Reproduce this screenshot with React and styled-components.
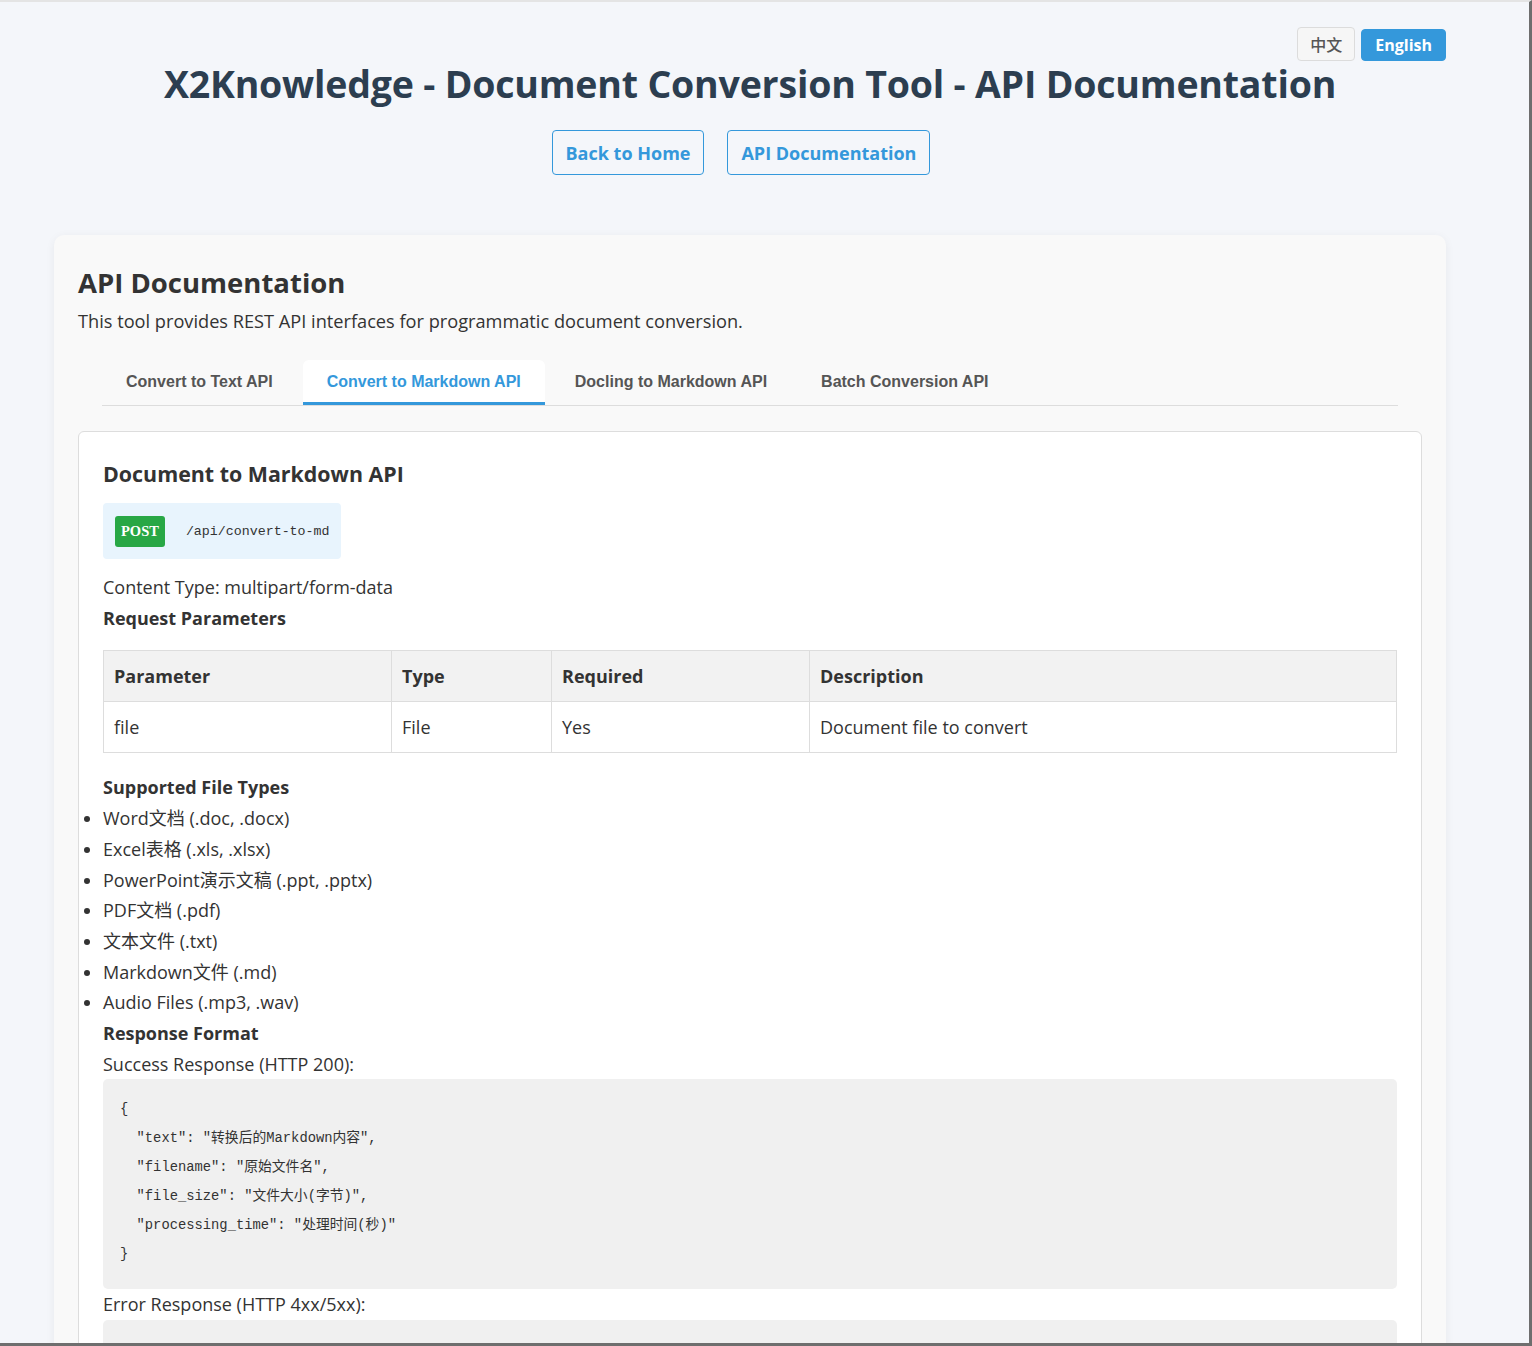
import React, { useState } from "react";
import styled, { createGlobalStyle } from "styled-components";

const GlobalStyle = createGlobalStyle`
  html, body {
    margin: 0;
    padding: 0;
    background: #f4f6fa;
  }
  body {
    font-family: "Open Sans", "Noto Sans CJK SC", sans-serif;
    color: #333;
  }
`;

// 창 테두리 (스크린샷의 프레임)
const Frame = styled.div`
  position: fixed;
  inset: 0;
  z-index: 10;
  pointer-events: none;
  border-top: 2px solid #e4e4e4;
  border-right: 3px solid #6e6e6e;
  border-bottom: 3px solid #6e6e6e;
`;

const Page = styled.div`
  position: relative;
  width: 1392px;
  margin-left: 54px;
  padding-bottom: 40px;
`;

const LangSwitch = styled.div`
  position: absolute;
  top: 27px;
  right: 0;
  display: flex;
  gap: 6px;
  align-items: flex-end;
`;

const LangButton = styled.button`
  font-family: "Open Sans", "Noto Sans CJK SC", sans-serif;
  font-size: 16px;
  font-weight: ${(p) => (p.active ? 700 : 500)};
  height: ${(p) => (p.active ? "32px" : "34px")};
  padding: 0 ${(p) => (p.active ? "13px" : "12px")};
  border-radius: 4px;
  border: 1px solid ${(p) => (p.active ? "#3498db" : "#dcdcdc")};
  background: ${(p) => (p.active ? "#3498db" : "#f6f6f6")};
  color: ${(p) => (p.active ? "#fff" : "#555")};
  cursor: pointer;
`;

const Header = styled.header`
  display: flex;
  flex-direction: column;
  align-items: center;
  padding-top: 60px;
`;

const Title = styled.h1`
  margin: 0;
  font-size: 37.5px;
  line-height: 48px;
  font-weight: 700;
  color: #2c3e50;
  letter-spacing: -0.2px;
`;

const NavRow = styled.nav`
  display: flex;
  gap: 23px;
  margin-top: 22px;
  margin-right: 18px;
`;

const NavButton = styled.a`
  display: flex;
  align-items: center;
  height: 45px;
  box-sizing: border-box;
  padding: 0 13px;
  border: 1px solid #3498db;
  border-radius: 4px;
  color: #3498db;
  font-size: 18px;
  font-weight: 700;
  text-decoration: none;
  background: transparent;
`;

const Card = styled.section`
  margin-top: 60px;
  background: #f9f9f9;
  border-radius: 10px;
  box-shadow: 0 2px 10px rgba(0, 0, 0, 0.06);
  padding: 30px 24px 24px;
`;

const CardTitle = styled.h2`
  margin: 0;
  font-size: 27.5px;
  line-height: 36px;
  font-weight: 700;
  color: #333;
`;

const Lead = styled.p`
  margin: 5px 0 0;
  font-size: 18.2px;
  line-height: 30px;
`;

const Tabs = styled.div`
  display: flex;
  margin: 24px 24px 0;
  border-bottom: 1px solid #ddd;
`;

const Tab = styled.button`
  height: 45px;
  padding: 2px 24px 0;
  border: none;
  border-bottom: 3px solid ${(p) => (p.active ? "#3498db" : "transparent")};
  border-radius: 6px 6px 0 0;
  background: ${(p) => (p.active ? "#fff" : "transparent")};
  color: ${(p) => (p.active ? "#3498db" : "#555")};
  font-family: "Liberation Sans", Arial, sans-serif;
  font-size: 16px;
  font-weight: 700;
  cursor: pointer;
  margin-right: 6px;
`;

const Panel = styled.div`
  margin-top: 25px;
  background: #fff;
  border: 1px solid #ddd;
  border-radius: 6px;
  padding: 27px 24px 24px;
`;

const PanelTitle = styled.h3`
  margin: 0;
  font-size: 21.4px;
  line-height: 29px;
  font-weight: 700;
  color: #333;
`;

const Endpoint = styled.div`
  display: inline-flex;
  align-items: center;
  gap: 21px;
  margin-top: 15px;
  padding: 13px 11px 12px 12px;
  background: #e8f4fd;
  border-radius: 4px;
`;

const Method = styled.span`
  display: inline-flex;
  align-items: center;
  height: 31px;
  padding: 0 6px;
  background: #28a745;
  color: #fff;
  border-radius: 3px;
  font-family: "Liberation Serif", "Noto Sans CJK SC", serif;
  font-weight: 700;
  font-size: 14.5px;
`;

const Path = styled.code`
  font-family: "Liberation Mono", "Noto Sans CJK SC", monospace;
  font-size: 13.3px;
  color: #333;
`;

const Text = styled.p`
  margin: ${(p) => p.mt || 0}px 0 0;
  font-size: 18px;
  line-height: 30.7px;
  font-weight: ${(p) => (p.bold ? 700 : 400)};
`;

const Table = styled.table`
  width: 100%;
  margin-top: 17px;
  border-collapse: collapse;
  font-size: 18px;
  th, td {
    border: 1px solid #ddd;
    padding: 10px;
    line-height: 30px;
    text-align: left;
  }
  th {
    background: #f2f2f2;
    font-weight: 700;
  }
`;

const List = styled.ul`
  margin: 0;
  padding: 0;
  font-size: 18px;
  line-height: 30.7px;
  li {
    margin: 0;
  }
`;

const Code = styled.pre`
  margin: 0;
  padding: 16px 17px 20px;
  background: #f0f0f0;
  border-radius: 5px;
  font-family: "Liberation Mono", "Noto Sans CJK SC", monospace;
  font-size: 13.8px;
  line-height: 29px;
  color: #333;
  white-space: pre;
`;

const tabs = [
  "Convert to Text API",
  "Convert to Markdown API",
  "Docling to Markdown API",
  "Batch Conversion API",
];

const fileTypes = [
  "Word文档 (.doc, .docx)",
  "Excel表格 (.xls, .xlsx)",
  "PowerPoint演示文稿 (.ppt, .pptx)",
  "PDF文档 (.pdf)",
  "文本文件 (.txt)",
  "Markdown文件 (.md)",
  "Audio Files (.mp3, .wav)",
];

const successJson = `{
  "text": "转换后的Markdown内容",
  "filename": "原始文件名",
  "file_size": "文件大小(字节)",
  "processing_time": "处理时间(秒)"
}`;

const errorJson = `{
  "error": "错误信息"
}`;

function App() {
  const [active, setActive] = useState(1);
  const [lang, setLang] = useState("en");

  return (
    <>
      <GlobalStyle />
      <Frame />
      <Page>
        <LangSwitch>
          <LangButton active={lang === "zh"} onClick={() => setLang("zh")}>
            中文
          </LangButton>
          <LangButton active={lang === "en"} onClick={() => setLang("en")}>
            English
          </LangButton>
        </LangSwitch>

        <Header>
          <Title>X2Knowledge - Document Conversion Tool - API Documentation</Title>
          <NavRow>
            <NavButton href="#">Back to Home</NavButton>
            <NavButton href="#">API Documentation</NavButton>
          </NavRow>
        </Header>

        <Card>
          <CardTitle>API Documentation</CardTitle>
          <Lead>
            This tool provides REST API interfaces for programmatic document
            conversion.
          </Lead>

          <Tabs>
            {tabs.map((t, i) => (
              <Tab key={t} active={i === active} onClick={() => setActive(i)}>
                {t}
              </Tab>
            ))}
          </Tabs>

          <Panel>
            <PanelTitle>Document to Markdown API</PanelTitle>
            <Endpoint>
              <Method>POST</Method>
              <Path>/api/convert-to-md</Path>
            </Endpoint>

            <Text mt={13}>Content Type: multipart/form-data</Text>
            <Text bold>Request Parameters</Text>

            <Table>
              <colgroup>
                <col style={{ width: "288px" }} />
                <col style={{ width: "160px" }} />
                <col style={{ width: "258px" }} />
                <col />
              </colgroup>
              <thead>
                <tr>
                  <th>Parameter</th>
                  <th>Type</th>
                  <th>Required</th>
                  <th>Description</th>
                </tr>
              </thead>
              <tbody>
                <tr>
                  <td>file</td>
                  <td>File</td>
                  <td>Yes</td>
                  <td>Document file to convert</td>
                </tr>
              </tbody>
            </Table>

            <Text bold mt={19}>Supported File Types</Text>
            <List>
              {fileTypes.map((f) => (
                <li key={f}>{f}</li>
              ))}
            </List>

            <Text bold>Response Format</Text>
            <Text>Success Response (HTTP 200):</Text>
            <Code>{successJson}</Code>
            <Text>Error Response (HTTP 4xx/5xx):</Text>
            <Code>{errorJson}</Code>
          </Panel>
        </Card>
      </Page>
    </>
  );
}

export default App;
